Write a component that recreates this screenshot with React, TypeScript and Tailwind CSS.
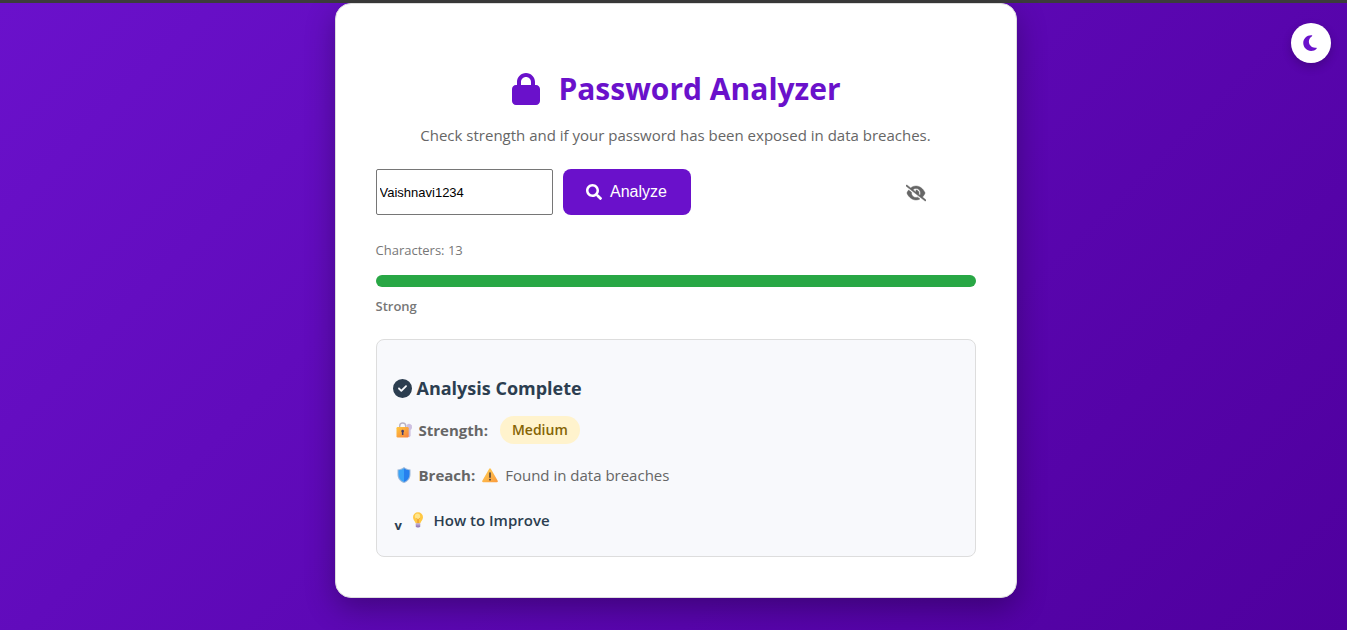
import { useState } from 'react';
import { FaLock, FaMoon, FaCircleCheck, FaEyeSlash } from 'react-icons/fa6';
import { FaSearch } from 'react-icons/fa';

function LockKeyIcon() {
  return (
    <svg viewBox="0 0 18 18" className="h-[18px] w-[18px] shrink-0" aria-hidden="true">
      <defs>
        <linearGradient id="lockBody" x1="0" y1="0" x2="1" y2="1">
          <stop offset="0" stopColor="#ffc83d" />
          <stop offset="1" stopColor="#f8803e" />
        </linearGradient>
      </defs>
      <path d="M11.500 4.200a3 3 0 0 1 5.500 2.200 3 3 0 0 1-1.400 2.500V15l-1.300 1.200L12.600 15z" fill="#cdbfe0" />
      <path d="M4.700 7V5a3 3 0 0 1 6 0v2" fill="none" stroke="#b9b2c4" strokeWidth="1.400" />
      <rect x="1.500" y="6" width="12.200" height="10.500" rx="1.200" fill="url(#lockBody)" />
      <path d="M7.600 8.700a1.500 1.500 0 0 1 .8 2.700v2.700H6.900v-2.700a1.500 1.500 0 0 1 .7-2.700z" fill="#433b6b" />
    </svg>
  );
}

function ShieldIcon() {
  return (
    <svg viewBox="0 0 18 18" className="h-[18px] w-[18px] shrink-0" aria-hidden="true">
      <path d="M9 1c1.900 1.400 4 2.200 6.500 2.400V8.200c0 4.600-2.600 7.400-6.500 8.800-3.900-1.400-6.500-4.200-6.500-8.800V3.400C5 3.200 7.100 2.400 9 1z" fill="#9bb8da" />
      <path d="M9 2.200V15.900C5.500 14.500 3.500 11.900 3.500 8.200V4.300C5.600 4.100 7.400 3.400 9 2.200z" fill="#3ba4f7" />
      <path d="M9 2.200v13.700c3.500-1.400 5.500-4 5.500-7.700V4.300C12.400 4.100 10.600 3.400 9 2.200z" fill="#2680ee" />
    </svg>
  );
}

function WarningIcon() {
  return (
    <svg viewBox="0 0 18 18" className="h-[18px] w-[18px] shrink-0" aria-hidden="true">
      <defs>
        <linearGradient id="warn" x1="0" y1="0" x2="1" y2="1">
          <stop offset="0" stopColor="#ffd257" />
          <stop offset="1" stopColor="#fb9a3c" />
        </linearGradient>
      </defs>
      <path d="M8.200 2.700a.9.900 0 0 1 1.600 0l6.900 12.100a.9.900 0 0 1-.8 1.400H2.100a.9.900 0 0 1-.8-1.400z" fill="url(#warn)" />
      <path d="M9 7v4.300" stroke="#433b3b" strokeWidth="1.500" strokeLinecap="round" />
      <circle cx="9" cy="13.700" r=".9" fill="#433b3b" />
    </svg>
  );
}

function BulbIcon() {
  return (
    <svg viewBox="0 0 18 18" className="h-[18px] w-[18px] shrink-0" aria-hidden="true">
      <path d="M9 1.300a5 5 0 0 1 5 5c0 2.800-2.100 3.700-2.600 6H6.600C6.100 10 4 9.100 4 6.300a5 5 0 0 1 5-5z" fill="#ffc843" />
      <circle cx="8.500" cy="5.200" r="2.600" fill="#ffe58a" />
      <path d="M7.400 7.200 8.600 8.500v3.600M10.800 7.200 9.500 8.500v3.600" fill="none" stroke="#e99a2e" strokeWidth=".7" />
      <path d="M6.800 12.400h4.400v2.800l-1 1.300H7.800l-1-1.300z" fill="#9a80b8" />
      <path d="M6.800 13.800h4.400" stroke="#d7c8e6" strokeWidth=".7" />
    </svg>
  );
}

export default function App() {
  const [password, setPassword] = useState('Vaishnavi1234');
  return (
    <div className="min-h-screen border-t-3 border-[#3c3c3c] bg-linear-135 from-[#6a11cb] to-[#4f009e] pr-4 pb-8 pl-5 font-['Open_Sans','Noto_Sans',sans-serif] text-[#666666]">
      <button
        type="button"
        aria-label="Toggle dark mode"
        className="fixed top-[23px] right-4 flex size-10 items-center justify-center rounded-full bg-white pr-[2px] text-[#6a11cb] shadow-[0_4px_10px_rgba(0,0,0,0.2)]"
      >
        <FaMoon size={18} />
      </button>

      <main className="mx-auto max-w-[682px] rounded-2xl border border-[#dddddd] bg-white px-10 pt-[60px] pb-10 shadow-[0_10px_30px_rgba(0,0,0,0.3)]">
        <h1 className="flex items-center justify-center gap-4 text-[30px] leading-[50px] font-bold text-[#6a11cb]">
          <FaLock size={32} />
          Password Analyzer
        </h1>
        <p className="mt-[9px] text-center text-[15px] leading-6">
          Check strength and if your password has been exposed in data breaches.
        </p>

        <form className="mt-[22px] flex items-stretch gap-[10px]" onSubmit={(e) => e.preventDefault()}>
          <input
            type="text"
            aria-label="Password"
            value={password}
            onChange={(e) => setPassword(e.target.value)}
            className="h-[46px] w-[177px] rounded-xs border border-[#767676] bg-white px-[3px] font-['Liberation_Sans',sans-serif] text-[13px] text-black"
          />
          <button
            type="submit"
            className="flex w-32 items-center justify-center gap-2 rounded-lg bg-[#6a11cb] font-['Liberation_Sans',sans-serif] text-base text-white"
          >
            <FaSearch size={16} />
            Analyze
          </button>
          <button type="button" aria-label="Hide password" className="mr-[50px] ml-auto pt-[2px]">
            <FaEyeSlash size={20} stroke="currentColor" strokeWidth={14} />
          </button>
        </form>

        <p className="mt-6 text-[13px] leading-[22px] text-[#777777]">Characters: {password.length}</p>
        <div className="mt-[14px] h-3 rounded-full bg-[#28a745]" />
        <p className="mt-2 text-[13px] leading-[22px] font-semibold text-[#777777]">Strong</p>

        <section className="mt-[22px] rounded-lg border border-[#dddddd] bg-[#f8f9fc] px-4 pt-9 pb-[22px]">
          <h2 className="flex items-center gap-[5px] text-lg leading-6 font-bold text-[#2c3e50]">
            <FaCircleCheck size={19} />
            Analysis Complete
          </h2>
          <p className="mt-4 flex h-7 items-center pl-[2px] text-[15px]">
            <LockKeyIcon />
            <strong className="ml-[6px]">Strength:</strong>
            <span className="ml-3 rounded-full bg-[#fff3cd] px-3 text-sm leading-7 font-semibold text-[#856404]">Medium</span>
          </p>
          <p className="mt-[17px] flex h-7 items-center pl-[2px] text-[15px]">
            <ShieldIcon />
            <strong className="mx-[6px]">Breach:</strong>
            <WarningIcon />
            <span className="ml-[6px]">Found in data breaches</span>
          </p>
          <button type="button" className="mt-[17px] flex h-7 items-center pl-[2px] text-[15px] font-semibold text-[#2c3e50]">
            <span className="w-[14px] pt-3 text-left text-[13px] font-bold">v</span>
            <BulbIcon />
            <span className="ml-[7px]">How to Improve</span>
          </button>
        </section>
      </main>
    </div>
  );
}
